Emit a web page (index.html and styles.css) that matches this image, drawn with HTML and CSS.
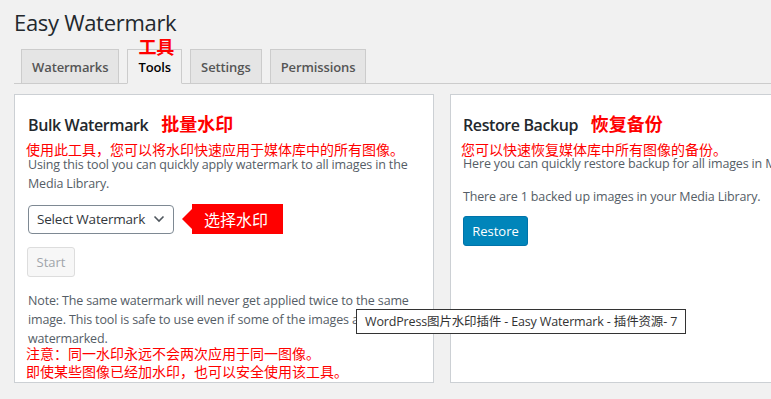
FILE: index.html
```html
<!DOCTYPE html>
<html lang="zh-CN">
<head>
<meta charset="utf-8">
<title>Easy Watermark</title>
<link rel="stylesheet" href="styles.css">
</head>
<body>
<div class="wrap">
  <h1 class="page-title">Easy Watermark</h1>
  <nav class="tabs">
    <span class="tab">Watermarks</span>
    <span class="tab active">Tools<span class="note-red tab-note">工具</span></span>
    <span class="tab">Settings</span>
    <span class="tab">Permissions</span>
  </nav>
  <div class="cards">
    <section class="card">
      <h2 class="card-title">Bulk Watermark <span class="red-title">批量水印</span></h2>
      <div class="red-line">使用此工具，您可以将水印快速应用于媒体库中的所有图像。</div>
      <p class="desc">Using this tool you can quickly apply watermark to all images in the Media Library.</p>
      <div class="select-row">
        <div class="select">
          <span>Select Watermark</span>
          <svg class="chev" width="12" height="8" viewBox="0 0 12 8"><path d="M1.5 1.5 L6 6 L10.5 1.5" fill="none" stroke="#50575e" stroke-width="1.6"/></svg>
        </div>
        <div class="callout">选择水印</div>
      </div>
      <button class="btn-disabled" type="button">Start</button>
      <p class="desc note">Note: The same watermark will never get applied twice to the same image. This tool is safe to use even if some of the images are already watermarked.</p>
      <div class="red-notes">注意：同一水印永远不会两次应用于同一图像。<br>即使某些图像已经加水印，也可以安全使用该工具。</div>
    </section>
    <section class="card">
      <h2 class="card-title">Restore Backup <span class="red-title">恢复备份</span></h2>
      <div class="red-line">您可以快速恢复媒体库中所有图像的备份。</div>
      <p class="desc nowrap">Here you can quickly restore backup for all images in Media Library.</p>
      <p class="desc">There are 1 backed up images in your Media Library.</p>
      <button class="btn-primary" type="button">Restore</button>
    </section>
  </div>
  <div class="tooltip">WordPress图片水印插件 - Easy Watermark - 插件资源- 7</div>
</div>
</body>
</html>
```

FILE: styles.css
```css
html, body {
  margin: 0;
  padding: 0;
  background: #f1f1f1;
  overflow: hidden;
}
body {
  font-family: "Open Sans", "Noto Sans CJK SC", sans-serif;
  color: #444;
  font-size: 13px;
  width: 771px;
  height: 399px;
}
.wrap {
  position: relative;
  padding-left: 14px;
}
.page-title {
  margin: 0;
  padding-top: 8px;
  font-size: 22px;
  font-weight: 400;
  line-height: 29px;
  color: #23282d;
  letter-spacing: -0.3px;
}
.tabs {
  display: flex;
  margin-top: 12px;
  padding-left: 7px;
  border-bottom: 1px solid #ccc;
  height: 34px;
}
.tab {
  position: relative;
  box-sizing: border-box;
  height: 35px;
  margin-right: 8px;
  padding: 0 10px;
  border: 1px solid #ccc;
  background: #e5e5e5;
  font-size: 13px;
  font-weight: 600;
  line-height: 34px;
  color: #555;
  letter-spacing: -0.1px;
}
.tab.active {
  background: #f1f1f1;
  border-bottom-color: #f1f1f1;
  color: #000;
}
.tab-note {
  position: absolute;
  left: 10px;
  top: -13px;
  line-height: 20px;
  font-size: 18px;
  font-weight: 700;
  color: #f00;
}
.cards {
  display: flex;
  gap: 16px;
  margin-top: 10px;
  width: 900px;
}
.card {
  box-sizing: border-box;
  width: 420px;
  height: 289px;
  padding: 0 13px;
  background: #fff;
  border: 1px solid #ccd0d4;
  flex: none;
}
.card:last-child {
  padding-left: 12px;
}
.card-title {
  margin: 17px 0 0;
  font-size: 16px;
  font-weight: 600;
  line-height: 22px;
  color: #23282d;
  letter-spacing: -0.4px;
}
.red-title {
  margin-left: 9px;
  font-family: "Noto Sans CJK SC", sans-serif;
  font-size: 18px;
  font-weight: 700;
  color: #f00;
  letter-spacing: 0;
}
.red-line {
  margin: 5px 0 -3px -2px;
  font-family: "Noto Sans CJK SC", sans-serif;
  font-size: 14px;
  line-height: 17px;
  color: #f00;
  white-space: nowrap;
}
.card:last-child .red-line {
  margin-bottom: -4px;
}
.desc {
  margin: 0;
  font-size: 12.5px;
  line-height: 19px;
  color: #555d66;
  letter-spacing: -0.15px;
}
.desc.nowrap {
  white-space: nowrap;
  margin-bottom: 14px;
}
.select-row {
  display: flex;
  align-items: center;
  margin-top: 11px;
}
.select {
  box-sizing: border-box;
  width: 146px;
  height: 29px;
  display: flex;
  align-items: center;
  justify-content: space-between;
  padding: 0 8px 0 8px;
  border: 1px solid #7e8993;
  border-radius: 4px;
  font-size: 13.5px;
  color: #32373c;
  letter-spacing: -0.2px;
}
.callout {
  position: relative;
  margin-left: 18px;
  height: 30px;
  width: 91px;
  box-sizing: border-box;
  padding-left: 12px;
  background: #f00;
  color: #fff;
  font-family: "Noto Sans CJK SC", sans-serif;
  font-size: 16px;
  line-height: 30px;
}
.callout::before {
  content: "";
  position: absolute;
  left: -10px;
  top: 5px;
  border-style: solid;
  border-width: 10px 10px 10px 0;
  border-color: transparent #f00 transparent transparent;
}
.btn-disabled {
  display: block;
  margin: 13px 0 0 -1px;
  width: 48px;
  height: 30px;
  padding: 0;
  background: #f7f7f7;
  border: 1px solid #ddd;
  border-radius: 3px;
  font-family: inherit;
  font-size: 13px;
  color: #a0a5aa;
}
.note {
  margin-top: 14px;
}
.red-notes {
  margin: -4px 0 0 -2px;
  font-family: "Noto Sans CJK SC", sans-serif;
  font-size: 14px;
  line-height: 18px;
  color: #f00;
}
.btn-primary {
  display: block;
  margin-top: 10px;
  width: 65px;
  height: 30px;
  padding: 0;
  background: #0085ba;
  border: 1px solid #0073aa;
  border-radius: 3px;
  font-family: inherit;
  font-size: 13px;
  color: #fff;
}
.tooltip {
  position: absolute;
  left: 356px;
  top: 309px;
  box-sizing: border-box;
  width: 330px;
  height: 25px;
  padding: 0 8px;
  background: #fff;
  border: 1px solid #333;
  font-size: 12.5px;
  line-height: 23px;
  color: #333;
  white-space: nowrap;
  letter-spacing: -0.15px;
}
```
